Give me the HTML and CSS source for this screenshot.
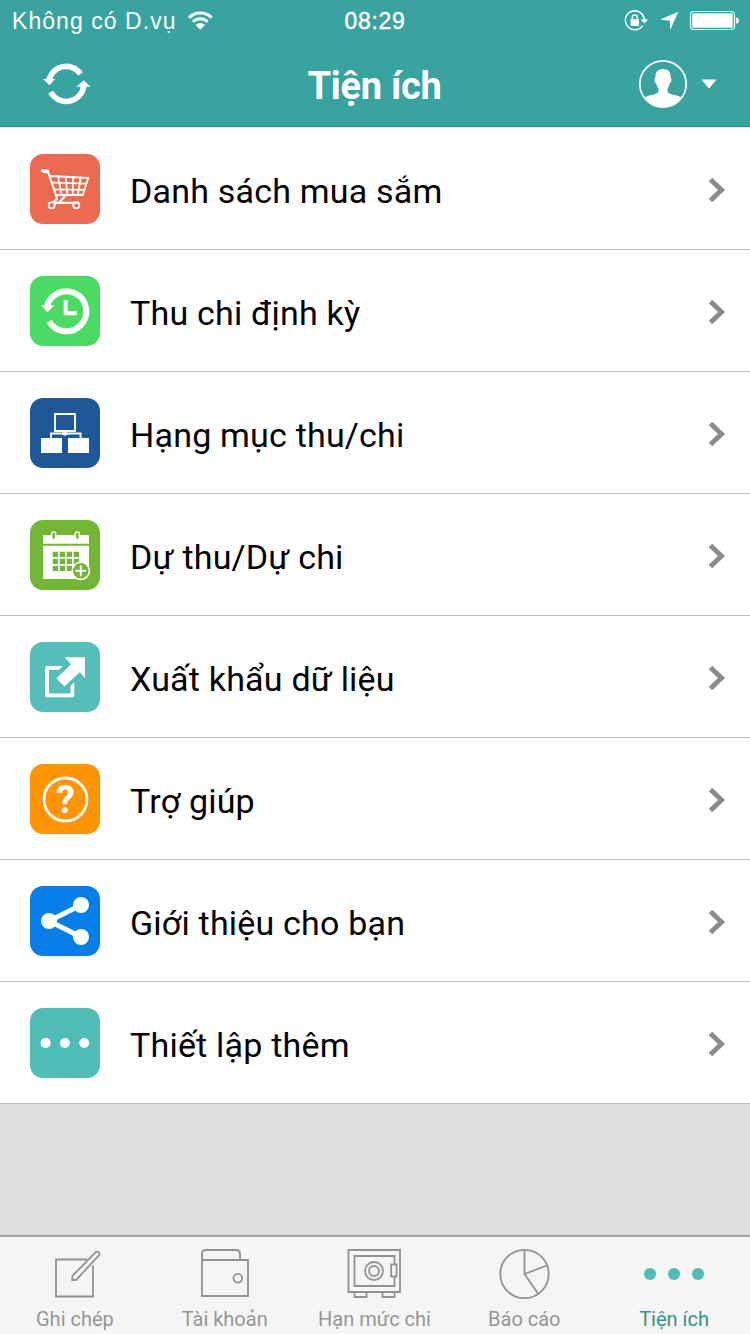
FILE: index.html
```html
<!DOCTYPE html>
<html lang="vi">
<head>
    <meta charset="utf-8">
    <title>Tiện ích</title>
    <link rel="stylesheet" href="styles.css">
</head>
<body>
    <div class="header">
        <div class="status-bar">
            <div class="status-left">
                <span class="carrier">Không có D.vụ</span>
                <svg class="wifi" width="26" height="20" viewBox="187 10 26 20">
                    <path d="M189 16.6a16 16 0 0 1 22.6 0M193 20.8a10.4 10.4 0 0 1 14.6 0" fill="none" stroke="#fff" stroke-width="2.9"/>
                    <path d="M195.6 23.9a6.8 6.8 0 0 1 9.4 0l-4.7 4.9z" fill="#fff"/>
                </svg>
            </div>
            <span class="clock">08:29</span>
            <div class="status-right">
                <svg width="25" height="22" viewBox="624 9.5 25 22">
                    <path d="M643.6 16.2a9.5 9.5 0 1 0-.9 8.9" fill="none" stroke="#fff" stroke-width="1.4"/>
                    <path d="M643.2 15.5q1.3 2 1.2 4" fill="none" stroke="#fff" stroke-width="1.4"/>
                    <path d="M640.5 19h7.6l-3.8 4z" fill="#fff"/>
                    <rect x="630.6" y="18.4" width="8.4" height="7" rx=".8" fill="#fff"/>
                    <path d="M632.3 19v-2a2.5 2.5 0 0 1 5 0v2" fill="none" stroke="#fff" stroke-width="1.4"/>
                </svg>
                <svg class="location" width="19" height="20" viewBox="660 11 19 20">
                    <path d="M678.4 11.8 670.2 30l-.3-9.3-9.8-1.2z" fill="#fff"/>
                </svg>
                <svg class="battery" width="50" height="22" viewBox="689 10 50 22">
                    <rect x="690.5" y="11.5" width="44" height="18" rx="3.2" fill="none" stroke="#fff" stroke-width="1.2"/>
                    <rect x="692.3" y="13.2" width="40.4" height="14.6" rx="1.4" fill="#fff"/>
                    <path d="M736.2 17.2q2.8.8 2.8 3.3t-2.8 3.3z" fill="#fff"/>
                </svg>
            </div>
        </div>
        <div class="nav-bar">
            <svg class="refresh" width="50" height="44" viewBox="42 61.5 50 44">
                <g fill="none" stroke="#fff" stroke-width="5.6">
                    <path d="M48.9 80.5A17.6 17.6 0 0 1 80.6 73.3"/>
                    <path d="M83.8 85A17.6 17.6 0 0 1 50.7 91.5"/>
                </g>
                <path d="M43.2 78.5h12l-5.8 6.3zM76.4 86.2h14.2l-7-6.4z" fill="#fff"/>
            </svg>
            <h1>Tiện ích</h1>
            <div class="account">
                <svg width="50" height="50" viewBox="638 59 50 50">
                    <circle cx="663" cy="84" r="23.2" fill="none" stroke="#fff" stroke-width="1.7"/>
                    <path d="M663.2 69c5.4 0 7.7 3.2 7.4 8.7 1.5.2 1.3 4.6-.8 5.6-.5 2.6-1.4 4.2-2.3 5.2v3.1c1.2 2.8 6.2 3.1 10 4.2 2 .6 3.2 1.2 4 2A23.3 23.3 0 0 1 663 107.5a23.3 23.3 0 0 1-18.5-9.7c.8-.8 2-1.4 4-2 3.8-1.1 8.8-1.4 10-4.2v-3.1c-.9-1-1.8-2.6-2.3-5.2-2.1-1-2.3-5.4-.8-5.6-.3-5.5 2.4-8.7 7.8-8.7z" fill="#fff"/>
                </svg>
                <svg width="16" height="10" viewBox="0 0 16 10">
                    <path d="M.3.5h15.4L8 9.5z" fill="#fff"/>
                </svg>
            </div>
        </div>
    </div>

    <div class="menu">
        <div class="menu-item">
            <svg class="menu-icon cart" viewBox="0 0 70 70">
                <g fill="none" stroke="#fff" stroke-width="1.8" stroke-linejoin="round" stroke-linecap="round">
                    <path d="M12.8 16.8l4.5.7" stroke-width="3.8"/>
                    <path d="M18 18 26.8 43.5q.6 2-1.6 3-1.7.9-1.2 2" stroke-width="2"/>
                    <path d="M20.3 22 58.3 24 52.8 41H26.2M22.2 28.7l34.3 1M24.3 35.3l30.2.5"/>
                    <path d="M28 22.3 31.5 41M35.5 22.6 37.5 41M43 23 42.7 41M50.7 23.4 47.8 41"/>
                    <path d="M34.5 42.5 29 48.7M25 48.8H46.5" stroke-width="2.2"/>
                    <circle cx="21.7" cy="51.3" r="3.1"/>
                    <circle cx="46.3" cy="51.3" r="3.1"/>
                </g>
            </svg>
            <span class="menu-label">Danh sách mua sắm</span>
            <svg class="chevron" viewBox="0 0 18 26"><path d="M2.5 2.5 13.5 13 2.5 23.5"/></svg>
        </div>
        <div class="menu-item">
            <svg class="menu-icon recurring" viewBox="0 0 70 70">
                <path d="M16.8 31A20 20 0 1 1 19.1 45.5" fill="none" stroke="#fff" stroke-width="6"/>
                <path d="M11.3 29.3h13.2L17.3 36.5z" fill="#fff"/>
                <path d="M35.7 24v13.2h11.1" fill="none" stroke="#fff" stroke-width="4"/>
            </svg>
            <span class="menu-label">Thu chi định kỳ</span>
            <svg class="chevron" viewBox="0 0 18 26"><path d="M2.5 2.5 13.5 13 2.5 23.5"/></svg>
        </div>
        <div class="menu-item">
            <svg class="menu-icon category" viewBox="0 0 70 70">
                <path d="M25 16h20v17H25zM21 40v-4.5h29.5V40" fill="none" stroke="#fff" stroke-width="1.9"/>
                <path d="M11 40h21v15H11zM38 40h21v15H38zM34 33h2v1.5h2V37h-1.500l-1.500 1-1.500-1H32v-2.500h2z" fill="#fff"/>
            </svg>
            <span class="menu-label">Hạng mục thu/chi</span>
            <svg class="chevron" viewBox="0 0 18 26"><path d="M2.5 2.5 13.5 13 2.5 23.5"/></svg>
        </div>
        <div class="menu-item">
            <svg class="menu-icon planned" viewBox="0 0 70 70">
                <path d="M14 15h44a1 1 0 0 1 1 1v7.7H13V16a1 1 0 0 1 1-1zM13 25.7h46V51l-8 8H14a1 1 0 0 1-1-1z" fill="#fff"/>
                <g fill="#71b635" stroke="#fff" stroke-width="1.5">
                    <rect x="21.7" y="12" width="4" height="7.5" rx="1.5"/>
                    <rect x="45.3" y="12" width="4" height="7.5" rx="1.5"/>
                </g>
                <path d="M22.7 34.3H49M22.7 41.3H49M22.7 48.3H49" stroke="#71b635" stroke-width="5.3" stroke-dasharray="5.3 1.7"/>
                <circle cx="50.8" cy="50.8" r="8.6" fill="#71b635" stroke="#fff" stroke-width="1.6"/>
                <path d="M45.3 50.8h11M50.8 45.3v11" stroke="#fff" stroke-width="2"/>
            </svg>
            <span class="menu-label">Dự thu/Dự chi</span>
            <svg class="chevron" viewBox="0 0 18 26"><path d="M2.5 2.5 13.5 13 2.5 23.5"/></svg>
        </div>
        <div class="menu-item">
            <svg class="menu-icon export" viewBox="0 0 70 70">
                <path d="M32.5 24 29 27.7H19V51.5H40.5V44L44.3 40V53.5a1.8 1.8 0 0 1-1.8 1.8H17a1.8 1.8 0 0 1-1.8-1.8V26A2 2 0 0 1 17 24z" fill="#fff"/>
                <path d="M34.7 15.3H55V36l-5.2-5.8L34.5 44.5 26.5 36.5 41 22.3z" fill="#fff"/>
            </svg>
            <span class="menu-label">Xuất khẩu dữ liệu</span>
            <svg class="chevron" viewBox="0 0 18 26"><path d="M2.5 2.5 13.5 13 2.5 23.5"/></svg>
        </div>
        <div class="menu-item">
            <svg class="menu-icon help" viewBox="0 0 70 70">
                <circle cx="35.5" cy="35.5" r="21.5" fill="none" stroke="#fff" stroke-width="2.8"/>
                <text class="help-mark" x="35.5" y="49">?</text>
            </svg>
            <span class="menu-label">Trợ giúp</span>
            <svg class="chevron" viewBox="0 0 18 26"><path d="M2.5 2.5 13.5 13 2.5 23.5"/></svg>
        </div>
        <div class="menu-item">
            <svg class="menu-icon share" viewBox="0 0 70 70">
                <path d="M51 19 19 35 51 51" fill="none" stroke="#fff" stroke-width="4.8"/>
                <g fill="#fff">
                    <circle cx="19" cy="35" r="8"/>
                    <circle cx="51" cy="19" r="8"/>
                    <circle cx="51" cy="51" r="8"/>
                </g>
            </svg>
            <span class="menu-label">Giới thiệu cho bạn</span>
            <svg class="chevron" viewBox="0 0 18 26"><path d="M2.5 2.5 13.5 13 2.5 23.5"/></svg>
        </div>
        <div class="menu-item">
            <svg class="menu-icon more" viewBox="0 0 70 70">
                <g fill="#fff">
                    <circle cx="15.7" cy="35" r="5"/>
                    <circle cx="35" cy="35" r="5"/>
                    <circle cx="54.2" cy="35" r="5"/>
                </g>
            </svg>
            <span class="menu-label">Thiết lập thêm</span>
            <svg class="chevron" viewBox="0 0 18 26"><path d="M2.5 2.5 13.5 13 2.5 23.5"/></svg>
        </div>
    </div>

    <div class="tab-bar">
        <div class="tab">
            <svg class="tab-icon" viewBox="-9 -.5 60 54">
                <path d="M33 11H2V48H39V17"/>
                <path d="M18.3 31.5v-4L41.5 3.8q1.8-1.4 3.4 0 1.3 1.6-.2 3.3L22 31.5z"/>
            </svg>
            <span>Ghi chép</span>
        </div>
        <div class="tab">
            <svg class="tab-icon" viewBox="0 0 60 54">
                <path d="M7 12h46v36H7zM7 12V6q0-4 4-4h30q4 0 4 4v6"/>
                <circle cx="42.8" cy="30.2" r="4.3"/>
            </svg>
            <span>Tài khoản</span>
        </div>
        <div class="tab">
            <svg class="tab-icon" viewBox="-.5 -1 60 54">
                <path d="M4 1h51.5v42H4zM10 7h40v30H10zM10 43v5h12v-5M38 43v5h12v-5"/>
                <circle cx="29.5" cy="22" r="9"/>
                <circle cx="29.5" cy="22" r="5"/>
                <rect class="latch" x="46.7" y="15.5" width="5.4" height="12"/>
            </svg>
            <span>Hạn mức chi</span>
        </div>
        <div class="tab">
            <svg class="tab-icon" viewBox="-.5 -.5 60 54">
                <circle cx="30" cy="25.5" r="24.2"/>
                <path d="M30 1.5v24l22.500-8.500M30 25.500l13.500 19.500"/>
            </svg>
            <span>Báo cáo</span>
        </div>
        <div class="tab active">
            <svg class="tab-icon" viewBox="0 -.5 60 54">
                <circle cx="6" cy="25.5" r="6"/>
                <circle cx="30" cy="25.5" r="6"/>
                <circle cx="54" cy="25.5" r="6"/>
            </svg>
            <span>Tiện ích</span>
        </div>
    </div>
</body>
</html>
```

FILE: styles.css
```css
* {
    box-sizing: border-box;
}

body {
    width: 750px;
    height: 1334px;
    margin: 0;
    display: flex;
    flex-direction: column;
    overflow: hidden;
    font-family: Roboto, sans-serif;
    background: #e0e0e0;
}

svg {
    display: block;
    flex-shrink: 0;
}

.header {
    height: 128px;
    background: #38a39f;
    color: #fff;
    border-bottom: 1px solid #e3eeee;
    box-shadow: inset 0 -1px 0 #4b7f7c;
}

.status-bar {
    display: grid;
    grid-template-columns: 1fr auto 1fr;
    align-items: center;
    height: 40px;
    padding: 0 11px 0 12px;
    font-family: "Liberation Sans", Arial, sans-serif;
    font-size: 23px;
}

.status-left,
.status-right {
    display: flex;
    align-items: center;
}

.status-right {
    justify-content: flex-end;
}

.carrier {
    letter-spacing: 1.05px;
    line-height: 42px;
}

.wifi {
    margin-left: 10px;
}

.clock {
    line-height: 42px;
    letter-spacing: 0.7px;
    margin-right: 1px;
    -webkit-text-stroke: 0.4px #fff;
}

.location {
    margin: 0 10px 0 11px;
}

.nav-bar {
    display: grid;
    grid-template-columns: 1fr auto 1fr;
    align-items: center;
    height: 87px;
    padding: 0 33px 0 32px;
}

.refresh {
    margin-left: 10px;
}

.nav-bar h1 {
    margin: 4px 0 0;
    font-size: 38px;
    font-weight: 700;
    line-height: 46px;
    letter-spacing: -0.3px;
}

.account {
    display: flex;
    justify-content: flex-end;
    align-items: center;
    gap: 13px;
}

.menu {
    background: #fff;
}

.menu-item {
    display: flex;
    align-items: center;
    height: 122px;
    padding: 0 24px 0 30px;
    border-bottom: 1px solid #c4c4c6;
}

.menu-icon {
    width: 70px;
    height: 70px;
    border-radius: 13px;
}

.menu-label {
    flex: 1;
    margin: 5px 0 0 30px;
    font-size: 34px;
    line-height: 44px;
    letter-spacing: 0.2px;
    color: #000;
}

.chevron {
    width: 18px;
    height: 26px;
    margin-top: 2px;
    fill: none;
    stroke: #8c8c8c;
    stroke-width: 5;
}

.cart {
    background: #ec6a50;
}

.recurring {
    background: #4bdb64;
}

.category {
    background: #1f5897;
}

.planned {
    background: #71b635;
}

.export {
    background: #55beb9;
}

.help {
    background: #ff9503;
}

.help-mark {
    font: bold 38px Roboto, sans-serif;
    text-anchor: middle;
    fill: #fff;
}

.share {
    background: #067ee8;
}

.more {
    background: #50bcb6;
}

.tab-bar {
    display: flex;
    height: 99px;
    margin-top: auto;
    padding-right: 1px;
    background: #f5f5f5;
    border-top: 2px solid #a3a3a3;
}

.tab {
    flex: 1;
    display: flex;
    flex-direction: column;
    align-items: center;
    padding-top: 11px;
    font-size: 20px;
    line-height: 28px;
    color: #969696;
}

.tab-icon {
    width: 60px;
    height: 54px;
    margin-bottom: 3px;
    overflow: visible;
    fill: none;
    stroke: #929292;
    stroke-width: 1.8;
}

.latch {
    fill: #f5f5f5;
}

.tab.active {
    color: #3b8e88;
}

.tab.active .tab-icon {
    fill: #50bcb6;
    stroke: none;
}
```
